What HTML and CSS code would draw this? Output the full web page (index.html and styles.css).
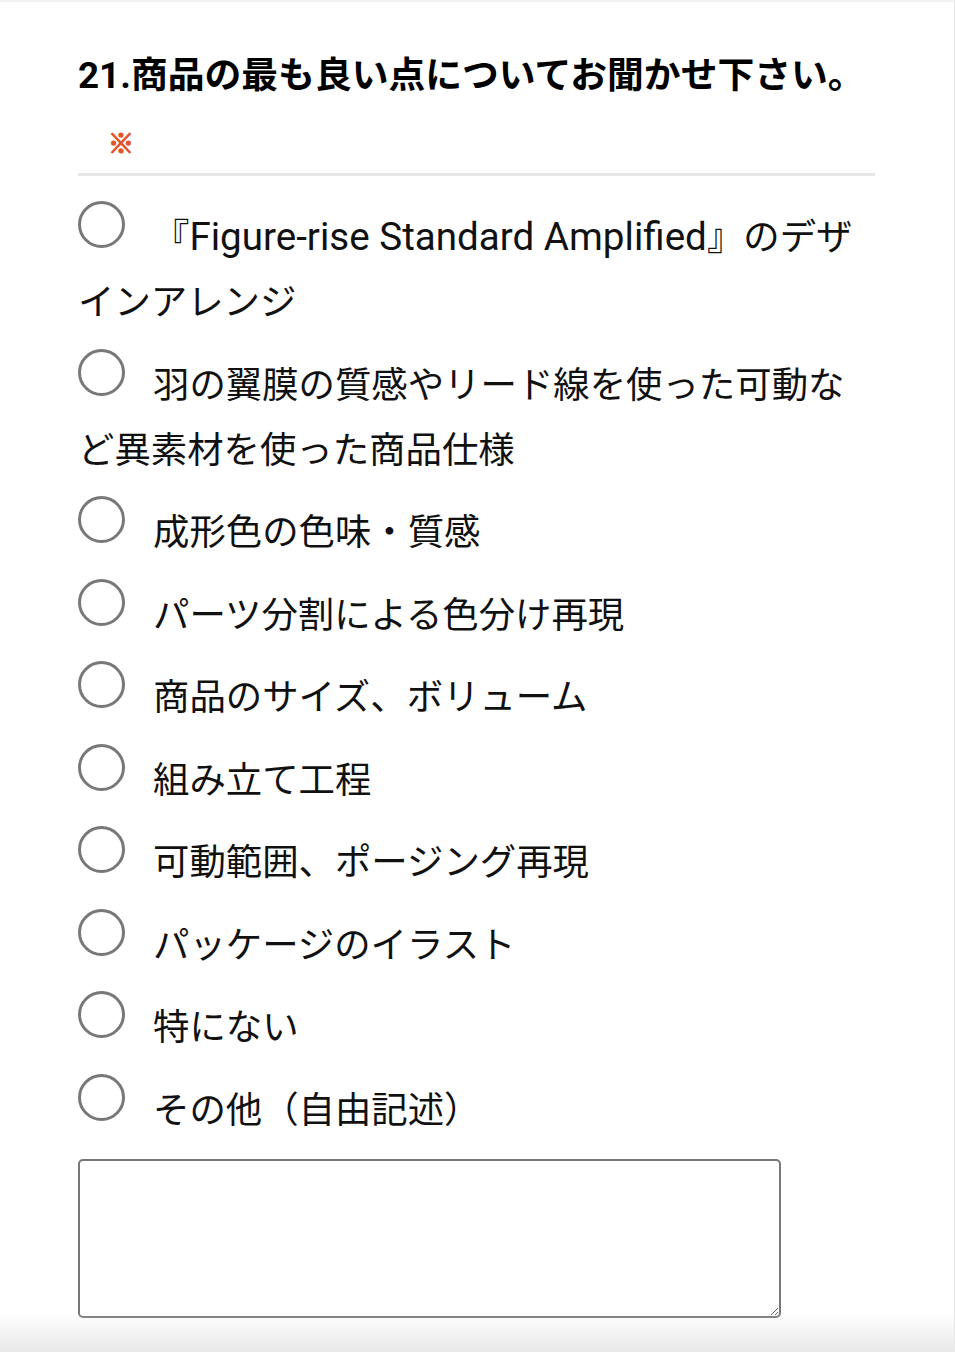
FILE: index.html
```html
<!DOCTYPE html>
<html lang="ja">
<head>
<meta charset="utf-8">
<title>アンケート</title>
<link rel="stylesheet" href="styles.css">
</head>
<body>
<div class="page">
  <section class="question">
    <h2 class="question-title">21.商品の最も良い点についてお聞かせ下さい。</h2>
    <div class="required">※</div>
    <div class="divider"></div>
    <div class="options">
      <label class="option"><input type="radio" name="q21" class="radio"><span>『</span><span class="latin">Figure-rise Standard Amplified</span><span>』のデザ</span><span>インアレンジ</span></label>
      <label class="option"><input type="radio" name="q21" class="radio"><span>羽の翼膜の質感やリード線を使った可動など異素材を使った商品仕様</span></label>
      <label class="option"><input type="radio" name="q21" class="radio"><span>成形色の色味・質感</span></label>
      <label class="option"><input type="radio" name="q21" class="radio"><span>パーツ分割による色分け再現</span></label>
      <label class="option"><input type="radio" name="q21" class="radio"><span>商品のサイズ、ボリューム</span></label>
      <label class="option"><input type="radio" name="q21" class="radio"><span>組み立て工程</span></label>
      <label class="option"><input type="radio" name="q21" class="radio"><span>可動範囲、ポージング再現</span></label>
      <label class="option"><input type="radio" name="q21" class="radio"><span>パッケージのイラスト</span></label>
      <label class="option"><input type="radio" name="q21" class="radio"><span>特にない</span></label>
      <label class="option"><input type="radio" name="q21" class="radio"><span>その他（自由記述）</span></label>
    </div>
    <textarea class="free-text"></textarea>
  </section>
</div>
<div class="bottom-fade"></div>
</body>
</html>
```

FILE: styles.css
```css
html, body {
  margin: 0;
  padding: 0;
  background: #ffffff;
}

body {
  font-family: Roboto, "Noto Sans CJK JP", sans-serif;
  color: #111111;
}

.page {
  box-sizing: border-box;
  min-height: 100vh;
  border-top: 2px solid #f2f2f2;
  border-right: 1px solid #e6e6e6;
  padding: 49px 79px 0 78px;
}

.question-title {
  margin: 0;
  font-size: 36.8px;
  line-height: 50px;
  font-weight: 700;
  color: #000000;
  font-family: Roboto, "Noto Sans CJK JP", sans-serif;
}

.required {
  margin-top: 20px;
  padding-left: 30px;
  font-size: 26px;
  font-weight: 700;
  line-height: 42px;
  color: #e0552f;
  -webkit-text-stroke: 1.3px #e0552f;
  font-family: "Noto Sans CJK JP", sans-serif;
}

.divider {
  margin-top: 10px;
  height: 3px;
  background: #e6e6e6;
}

.options {
  margin-top: 29px;
  padding-right: 8px;
  display: flex;
  flex-direction: column;
  gap: 17.5px;
}

.option {
  display: block;
  font-size: 36.4px;
  line-height: 65px;
  color: #111111;
}

.latin {
  font-size: 38.6px;
  line-height: 1;
}

.radio {
  -webkit-appearance: none;
  appearance: none;
  box-sizing: border-box;
  width: 47px;
  height: 47px;
  margin: -4px 28px 0 0;
  border: 3px solid #787878;
  border-radius: 50%;
  background: #ffffff;
  vertical-align: top;
}

.free-text {
  display: block;
  box-sizing: border-box;
  margin-top: 16px;
  width: 703px;
  height: 159px;
  border: 2px solid #777777;
  border-radius: 5px;
  background: #ffffff;
  font-size: 20px;
  font-family: Roboto, "Noto Sans CJK JP", sans-serif;
}

.bottom-fade {
  position: fixed;
  left: 0;
  right: 0;
  bottom: 0;
  height: 40px;
  background: linear-gradient(to bottom, rgba(234, 234, 234, 0), #e9e9e9);
  pointer-events: none;
}
```
